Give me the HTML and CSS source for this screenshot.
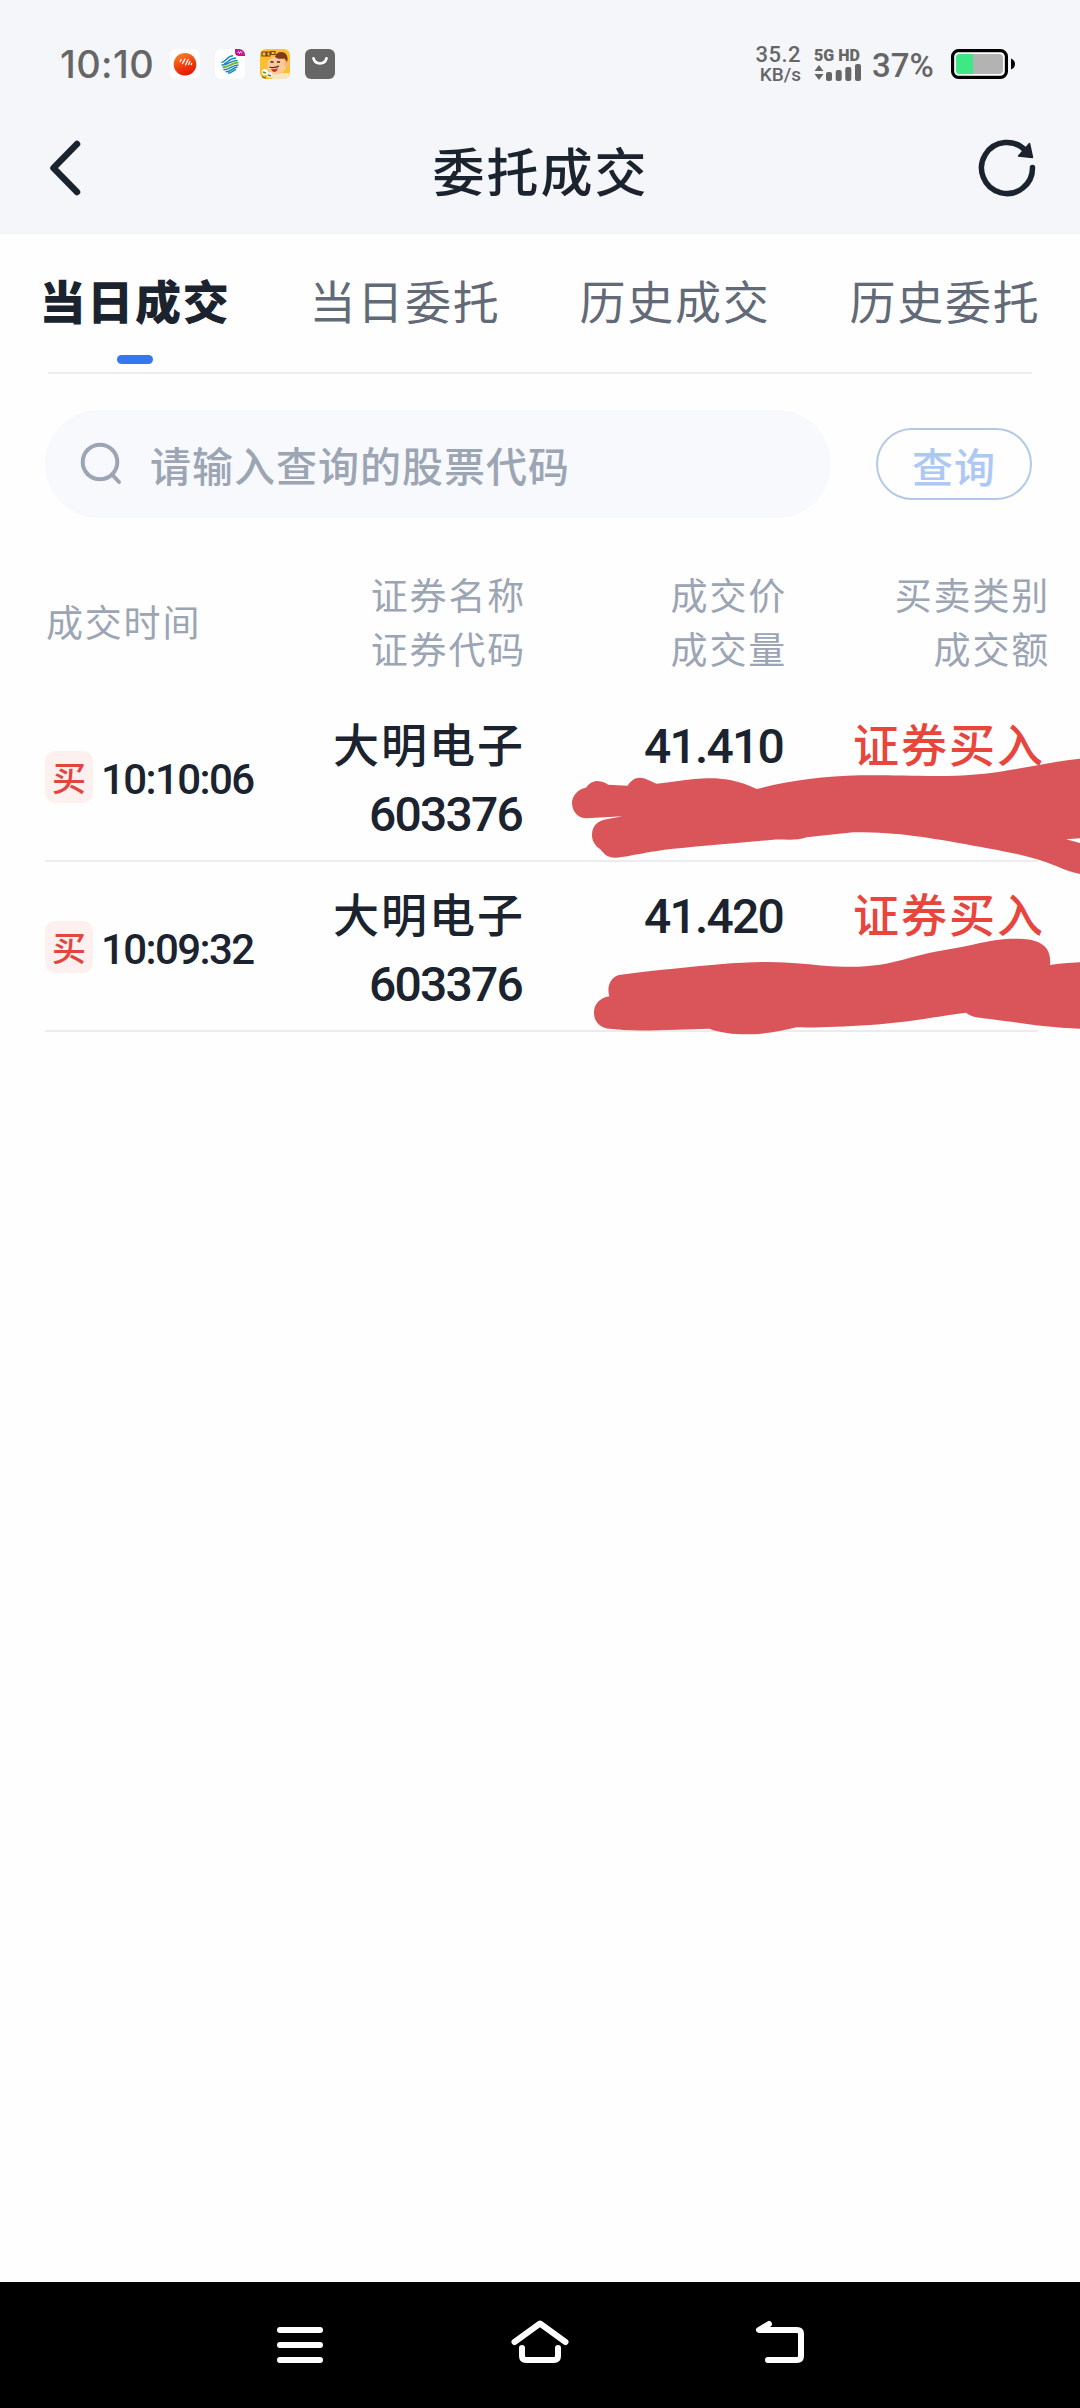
FILE: index.html
```html
<!DOCTYPE html>
<html lang="zh-CN">

<head>
    <meta charset="UTF-8">
    <title>委托成交</title>
    <link rel="stylesheet" href="styles.css">
</head>

<body>
    <header class="header">
        <div class="status-bar">
            <div class="status-left">
                <span class="clock">10:10</span>
                <svg class="app-icon" viewBox="0 0 30 30">
                    <defs>
                        <linearGradient id="sun" x1="0.2" y1="0" x2="0.6" y2="1">
                            <stop offset="0" stop-color="#f08a2c"/>
                            <stop offset="0.6" stop-color="#ee3c0c"/>
                            <stop offset="1" stop-color="#e81505"/>
                        </linearGradient>
                    </defs>
                    <rect width="30" height="30" rx="6" fill="#fff"/>
                    <circle cx="15" cy="15.2" r="11.3" fill="url(#sun)"/>
                    <path d="M10.200 12.500l1-2M12.500 14.500l2.500-4.500M15.500 16l2.700-5.500M18.500 15.500l1.500-3M21.200 15.500l.5-1" stroke="#fff" stroke-width="1.3" stroke-linecap="round"/>
                </svg>
                <svg class="app-icon" viewBox="0 0 30 30">
                    <rect width="30" height="30" rx="6" fill="#fff"/>
                    <g fill="none" stroke-width="1.500">
                        <path d="M6.500 13.500C11 13 12 6.700 18 6.700M9 15C13 14 14 9 21 9M6.500 16C14 16.500 14 11.500 22.500 11.500" stroke="#1a86b8"/>
                        <path d="M7.500 18.300C15 18.500 15 13.700 23.500 13.500" stroke="#79b83e" stroke-width="2.200"/>
                        <path d="M8.500 20.800C16 21 16 16 23.500 16M10.500 22.800C17 22.800 17 18.500 22.500 18M13 24.300C17 24 18 21.500 21 20.500" stroke="#1a86b8"/>
                    </g>
                    <path d="M20 0h4a6 6 0 0 1 6 6v1h-6a4 4 0 0 1-4-4z" fill="#c4128a"/>
                    <path d="M22.500 4l1-1.500 1 2 1.200-2.500M27 2.500l-.6 2" stroke="#fff" stroke-width=".7" fill="none"/>
                </svg>
                <svg class="app-icon" viewBox="0 0 30 30">
                    <defs><clipPath id="tile"><rect width="30" height="30" rx="6"/></clipPath></defs>
                    <g clip-path="url(#tile)">
                        <rect width="30" height="30" fill="#fbc02e"/>
                        <path d="M14 24h16v6H12z" fill="#fbe3c6"/>
                        <ellipse cx="16.500" cy="16.500" rx="9.500" ry="9" fill="#fbc99c"/>
                        <circle cx="27" cy="15" r="2.800" fill="#f6b384"/>
                        <path d="M15 8C16 3 21 2 25 4c3 3 3 6 2 9l-2.500-3.500C21 10 17 10 15 8z" fill="#7a3b22"/>
                        <path d="M2 3h4v4H2zM7 3h3v4H7zM11 2.500h4v3h-4z" fill="none" stroke="#7b3a12" stroke-width="1.100"/>
                        <path d="M10.500 13.500q1.500-1.500 3 0M17 13.500q1.500-1.500 3 0M9.500 18q5 1.500 9.500-1" fill="none" stroke="#54251a" stroke-width="1.200"/>
                        <path d="M11 20q4 1 7-1-1 4-4 4-2 0-3-3z" fill="#c83224"/>
                        <circle cx="5" cy="23" r="3" fill="#fff"/>
                        <circle cx="10" cy="26" r="3" fill="#f3f3e4"/>
                        <path d="M3 23l3 1M8 26l3 1M2 28l4 1" stroke="#4d8b42" stroke-width="1.500"/>
                    </g>
                </svg>
                <svg class="app-icon" viewBox="0 0 30 30">
                    <rect width="30" height="30" rx="6" fill="#666"/>
                    <path d="M8.500 9.300C10 16.200 20 16.200 21.500 9.300" fill="none" stroke="#fff" stroke-width="2.700" stroke-linecap="round"/>
                </svg>
            </div>
            <div class="status-right">
                <div class="net-speed">
                    <span class="speed-value">35.2</span>
                    <span class="speed-unit">KB/s</span>
                </div>
                <div class="signal">
                    <span class="signal-label">5G HD</span>
                    <svg width="47" height="17" viewBox="0 0 47 17" fill="#666">
                        <path d="M5 1l4.500 6h-9zM5 16l4.500-6h-9z"/>
                        <rect x="12" y="8" width="6" height="9" rx="2"/>
                        <rect x="21.700" y="6" width="6" height="11" rx="2"/>
                        <rect x="31.300" y="3" width="6" height="14" rx="2"/>
                        <rect x="41" y="0" width="6" height="17" rx="2"/>
                    </svg>
                </div>
                <span class="percent">37%</span>
                <svg class="battery" width="65" height="30" viewBox="0 0 65 30">
                    <rect x="1.600" y="1.600" width="53.800" height="26.800" rx="6" fill="#fff" stroke="#000" stroke-width="3.200"/>
                    <path d="M22 5h26a4 4 0 0 1 4 4v12a4 4 0 0 1-4 4H22z" fill="#b3b3b3"/>
                    <path d="M22 5H8a3 3 0 0 0-3 3v14a3 3 0 0 0 3 3h14z" fill="#3ee985"/>
                    <path d="M60 9.500q4 1.500 4 5.500t-4 5.500z"/>
                </svg>
            </div>
        </div>
        <div class="title-bar">
            <svg class="back" width="36" height="60" viewBox="0 0 36 60">
                <path d="M32 6L8.500 30 32 54" fill="none" stroke="#1b232f" stroke-width="6.500" stroke-linecap="round" stroke-linejoin="round"/>
            </svg>
            <h1>委托成交</h1>
            <svg class="refresh" width="60" height="60" viewBox="0 0 60 60">
                <path d="M55.500 29.500A25.500 25.500 0 1 1 49 13" fill="none" stroke="#1b232f" stroke-width="5.500" stroke-linecap="round"/>
                <path d="M52.500 5.500l3 14-14-1.500z" fill="#1b232f" stroke="#1b232f" stroke-width="1.500" stroke-linejoin="round"/>
            </svg>
        </div>
    </header>

    <nav class="tabs">
        <a class="tab active">当日成交</a>
        <a class="tab">当日委托</a>
        <a class="tab">历史成交</a>
        <a class="tab">历史委托</a>
    </nav>

    <section class="search">
        <div class="search-box">
            <svg width="46" height="46" viewBox="0 0 46 46" fill="none" stroke="#9ca5b4" stroke-width="4" stroke-linecap="round">
                <circle cx="22" cy="21" r="17.300"/>
                <path d="M35 34.500l6 6.500"/>
            </svg>
            <span>请输入查询的股票代码</span>
        </div>
        <button class="search-btn">查询</button>
    </section>

    <section class="deals">
        <div class="grid deals-head">
            <div class="time">成交时间</div>
            <div class="cell">证券名称<br>证券代码</div>
            <div class="cell">成交价<br>成交量</div>
            <div class="cell">买卖类别<br>成交额</div>
        </div>
        <div class="grid deal">
            <div class="time"><i class="badge">买</i><span>10:10:06</span></div>
            <div class="cell"><span class="name">大明电子</span><span class="num">603376</span></div>
            <div class="cell"><span class="num price">41.410</span></div>
            <div class="cell"><span class="name side">证券买入</span></div>
        </div>
        <div class="grid deal">
            <div class="time"><i class="badge">买</i><span>10:09:32</span></div>
            <div class="cell"><span class="name">大明电子</span><span class="num">603376</span></div>
            <div class="cell"><span class="num price">41.420</span></div>
            <div class="cell"><span class="name side">证券买入</span></div>
        </div>
        <!-- marker strokes over volume and amount -->
        <svg class="marker" viewBox="0 600 1560 900" fill="#da555a">
            <path d="M1560 656C1440 668 1320 706 1160 708C1060 708 1000 704 900 706C790 708 680 724 590 747C530 718 480 714 440 715C390 716 340 727 290 731C268 722 255 713 239 713C224 713 211 723 203 737L145 734C131 725 120 723 110 723C96 724 87 732 78 743C52 748 36 768 36 790C37 818 56 835 80 835L187 829L132 839C108 845 96 862 96 884C96 904 106 918 121 928C134 946 146 953 164 953C190 953 270 933 340 926C440 917 550 907 640 899C680 898 710 903 740 892L880 877C1010 876 1100 892 1240 917C1350 936 1420 950 1490 979Q1530 997 1560 1002V909L1518 898L1560 895Z"/>
            <path d="M148 1369C138 1335 156 1306 182 1304C230 1299 270 1291 340 1286C440 1276 530 1266 620 1266C720 1266 790 1281 860 1280C930 1281 980 1273 1050 1253C1130 1231 1190 1226 1260 1209C1320 1196 1350 1195 1390 1197C1440 1200 1476 1220 1470 1275Q1510 1269 1560 1267V1466C1450 1463 1380 1448 1290 1437C1260 1433 1238 1434 1218 1418C1120 1431 1040 1448 930 1455C840 1461 770 1463 710 1462C660 1475 610 1483 560 1483C520 1483 480 1478 448 1466C370 1467 270 1474 190 1470C170 1468 160 1467 146 1466C118 1463 102 1444 102 1418C102 1393 118 1374 148 1369Z"/>
        </svg>
    </section>

    <footer class="nav-bar">
        <svg width="60" height="50" viewBox="0 0 60 50">
            <path d="M10 10H50M10 25H50M10 40H50" />
        </svg>
        <svg width="60" height="50" viewBox="0 0 60 50">
            <path d="M4.500 22L30 3.500 55.500 22M12 28V36Q12 40 16 40H44Q48 40 48 36V28"/>
        </svg>
        <svg width="60" height="50" viewBox="0 0 60 50">
            <path d="M19 4L9 10H47Q51 10 51 14V36Q51 40 47 40H18"/>
            <path class="solid" d="M9 10l10-6-1 6z"/>
        </svg>
    </footer>
</body>

</html>
```
FILE: styles.css
```css
* {
  box-sizing: border-box;
}
body {
  margin: 0;
  width: 1080px;
  height: 2408px;
  display: flex;
  flex-direction: column;
  background-color: #fefefe;
  color: #1b232f;
  font-family: Roboto, "Noto Sans CJK SC", sans-serif;
  overflow: hidden;
}
svg {
  display: block;
  flex: none;
}

/* header */
.header {
  height: 234px;
  background-color: #f5f6fa;
}
.status-bar {
  height: 128px;
  padding: 0 64px 0 60px;
  display: flex;
  justify-content: space-between;
  align-items: center;
  color: #666;
}
.status-left,
.status-right {
  display: flex;
  align-items: center;
}
.clock {
  width: 110px;
  font: 500 38px/44px Inter, sans-serif;
  letter-spacing: 0.4px;
}
.app-icon {
  width: 30px;
  height: 30px;
  margin-right: 15px;
}
.net-speed {
  width: 48px;
  display: flex;
  flex-direction: column;
  align-items: flex-end;
  font-weight: 500;
}
.speed-value {
  font-size: 22px;
  line-height: 21px;
  letter-spacing: 0.5px;
}
.speed-unit {
  font-size: 19px;
  line-height: 19px;
}
.signal {
  width: 47px;
  margin: 0 11px 0 13px;
}
.signal-label {
  display: block;
  font-size: 16px;
  line-height: 17px;
  font-weight: 900;
  white-space: nowrap;
}
.percent {
  width: 79px;
  padding-top: 4px;
  font-size: 33px;
  line-height: 40px;
  font-weight: 500;
}
.title-bar {
  height: 80px;
  padding: 0 43px 0 45px;
  display: flex;
  justify-content: space-between;
  align-items: center;
}
.title-bar h1 {
  margin: 14px 0 0 23px;
  font-size: 52px;
  line-height: 60px;
  font-weight: 500;
  letter-spacing: 2px;
}

/* tabs */
.tabs {
  height: 140px;
  display: grid;
  grid-template-columns: repeat(4, 270px);
  background: linear-gradient(#ebecee, #ebecee) 48px 138px / 984px 2px no-repeat;
}
.tab {
  display: flex;
  flex-direction: column;
  align-items: center;
  padding-top: 37px;
  font-size: 46px;
  line-height: 64px;
  letter-spacing: 1.700px;
  color: #626a77;
}
.tab.active {
  color: #1b232f;
  font-weight: 900;
}
.tab.active::after {
  content: "";
  width: 36px;
  height: 9px;
  margin-top: 20px;
  border-radius: 5px;
  background-color: #3478f0;
}

/* search */
.search {
  display: flex;
  align-items: center;
  padding: 36px 48px 0 45px;
  justify-content: space-between;
}
.search-box {
  width: 786px;
  height: 108px;
  border-radius: 54px;
  padding: 0 33px;
  display: flex;
  align-items: center;
  background-color: #f8f9fc;
  color: #9ca5b4;
  font-size: 41px;
  line-height: 60px;
  letter-spacing: 1px;
  font-weight: 500;
}
.search-box span {
  margin: 8px 0 0 26px;
}
.search-btn {
  width: 156px;
  height: 72px;
  padding: 2px 0 0;
  border: 2px solid #b3c9e8;
  border-radius: 36px;
  background: none;
  color: #adc8f4;
  font: 500 41px/60px "Noto Sans CJK SC", sans-serif;
  letter-spacing: 1px;
}

/* deals */
.deals {
  position: relative;
  padding: 45px 42px 0 45px;
}
.grid {
  display: grid;
  grid-template-columns: 210px 270px 261px 1fr;
}
.cell {
  text-align: right;
}
.deals-head {
  height: 124px;
  margin: 0 -12px 5px 1px;
  align-items: center;
  color: #9ca5b4;
  font-size: 37px;
  line-height: 54px;
  letter-spacing: 1.800px;
}
.deal {
  height: 170px;
  margin-right: -7px;
  background: linear-gradient(#ebecee, #ebecee) 0 168px / 993px 2px no-repeat;
  font-weight: 500;
}
.deal .cell {
  display: flex;
  flex-direction: column;
  align-items: flex-end;
  padding-top: 20px;
}
.deal .time {
  display: flex;
  align-items: center;
  gap: 8px;
  font-size: 42px;
  letter-spacing: -1.600px;
}
.deal .time span {
  padding-top: 4px;
}
.badge {
  width: 48px;
  height: 52px;
  flex: none;
  border-radius: 10px;
  background-color: #fff0f0;
  color: #e2453d;
  font-size: 34px;
  line-height: 56px;
  font-style: normal;
  font-weight: 500;
  letter-spacing: 0;
  text-align: center;
}
.name {
  font-size: 46px;
  line-height: 68px;
  letter-spacing: 2px;
}
.num {
  font-size: 48px;
  line-height: 70px;
  letter-spacing: -1.800px;
  margin-right: 3px;
}
.side {
  color: #e8453d;
}
.marker {
  position: absolute;
  right: 0;
  top: 222px;
  width: 520px;
  height: 300px;
}

/* system navigation */
.nav-bar {
  height: 126px;
  margin-top: auto;
  display: flex;
  justify-content: center;
  gap: 180px;
  padding-top: 38px;
  background-color: #000;
}
.nav-bar path {
  fill: none;
  stroke: #fff;
  stroke-width: 6;
  stroke-linecap: round;
  stroke-linejoin: round;
}
.nav-bar .solid {
  fill: #fff;
  stroke-width: 3;
}
```
